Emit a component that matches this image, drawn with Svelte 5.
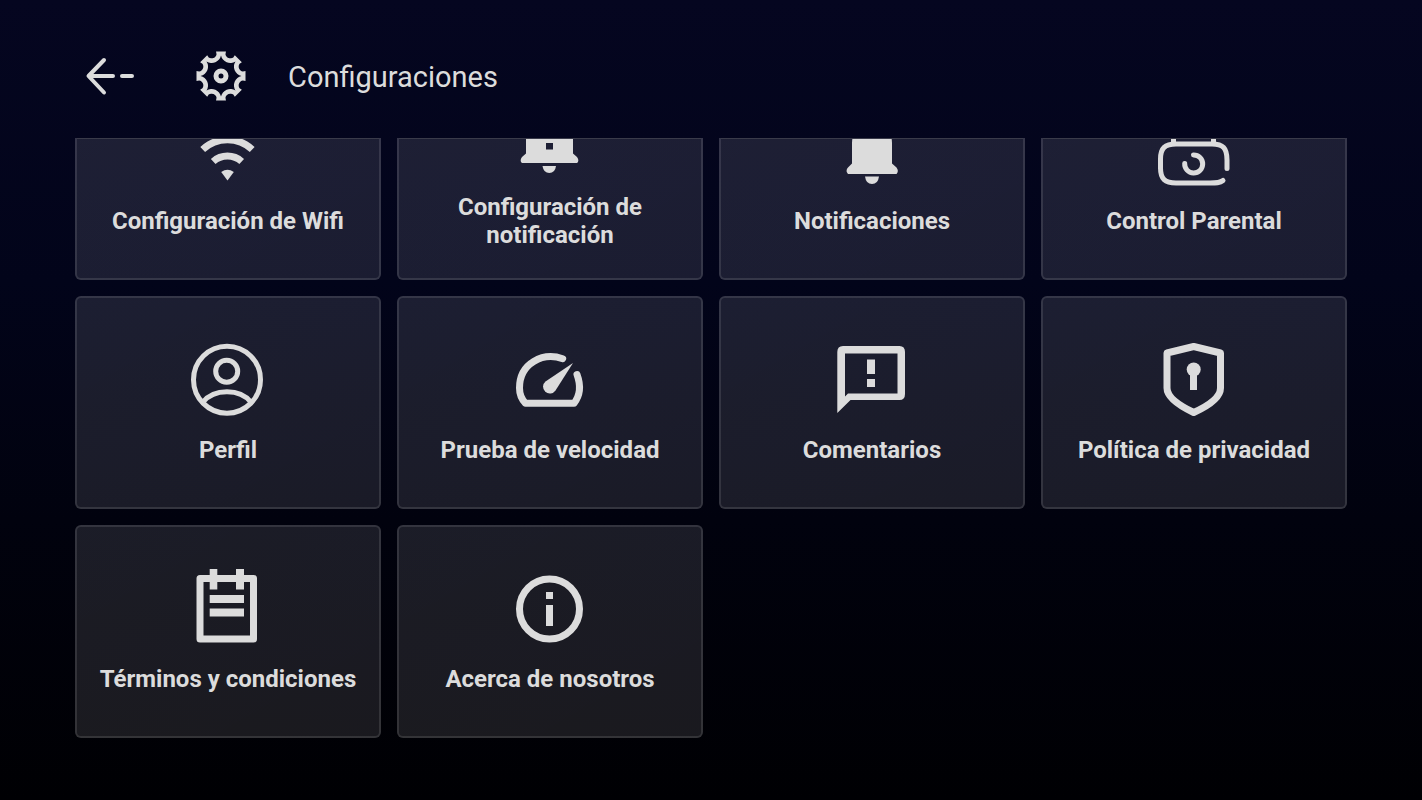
<script lang="ts">
  // Settings entries, in grid order
  const items = [
    { icon: 'wifi', label: 'Configuración de Wifi' },
    { icon: 'bell-alert', label: 'Configuración de notificación' },
    { icon: 'bell', label: 'Notificaciones' },
    { icon: 'parental', label: 'Control Parental' },
    { icon: 'profile', label: 'Perfil' },
    { icon: 'speed', label: 'Prueba de velocidad' },
    { icon: 'feedback', label: 'Comentarios' },
    { icon: 'privacy', label: 'Política de privacidad' },
    { icon: 'terms', label: 'Términos y condiciones' },
    { icon: 'info', label: 'Acerca de nosotros' },
  ];

  const polar = (r: number, deg: number) => {
    const a = (deg * Math.PI) / 180;
    return `${(26 + r * Math.cos(a)).toFixed(2)} ${(26 + r * Math.sin(a)).toFixed(2)}`;
  };

  // Eight-toothed gear: flat teeth joined by concave arcs
  function gearPath() {
    let outer = '';
    let inner = '';
    for (let k = 0; k < 8; k++) {
      const a = k * 45;
      outer += `${k ? 'L' : 'M'}${polar(25, a - 11.5)}L${polar(25, a + 11.5)}L${polar(22.3, a + 11.5)}A5 5 0 0 0 ${polar(22.3, a + 33.5)}`;
      inner += `${k ? '' : `M${polar(20.5, a)}`}A9.5 9.5 0 0 0 ${polar(20.5, a + 45)}`;
    }
    return `${outer}Z${inner}Z`;
  }
</script>

<div class="screen">
  <header class="header">
    <button class="back" aria-label="Volver">
      <svg width="52" height="40" viewBox="0 0 52 40" aria-hidden="true">
        <path class="line arrow" d="M20 4 4.500 20 20 36.500M5 20H29M38 20H48" />
      </svg>
    </button>
    <svg class="gear" width="52" height="52" viewBox="0 0 52 52" aria-hidden="true">
      <path fill-rule="evenodd" d={gearPath()} />
      <circle class="line w5" cx="26" cy="26" r="5" />
    </svg>
    <h1>Configuraciones</h1>
  </header>

  <main class="list">
    <div class="grid">
      {#each items as item}
        <button class="card">
          <svg width="80" height="80" viewBox="0 0 80 80" aria-hidden="true">
            {#if item.icon === 'wifi'}
              <path class="line w7 flat" d="M14.700 38.500A36.300 36.300 0 0 1 64.200 38.500M25.200 50.500A21.400 21.400 0 0 1 53.700 50.500" />
              <path d="M39.500 69.500 33.200 61Q39.500 56.500 45.800 61Z" />
            {:else if item.icon === 'bell-alert'}
              <path fill-rule="evenodd" d="M16 56.500V32Q16 15 33 11V9a6.500 6.500 0 0 1 13 0V11Q63 15 63 32V56.500L67 60Q69 62.500 68 65L67 66H12L11 65Q10 62.500 12 60ZM36 46V52.500H43V46Z" />
              <path d="M32.500 69H46Q45 76 39.300 76T32.500 69Z" />
            {:else if item.icon === 'bell'}
              <path d="M20 52.500V32Q20 18 34 14V12a6 6 0 0 1 12 0V14Q60 18 60 32V52.500L64.500 56.500Q66.500 59 65.500 61.500L64.500 63H16L15 61.500Q13.800 59 16 56.500Z" />
              <path d="M33 65.500H47Q46 73 40 73T33 65.500Z" />
            {:else if item.icon === 'parental'}
              <path class="line w5" d="M73 57.500V49C73 37 69 33 58 33H22C11 33 6.500 37 6.500 48V57C6.500 68 11 72 22 72H56C62 72 66 72 69 69.500" />
              <path class="line w5" d="M39.500 44A9 9 0 1 1 30.700 52.500" />
              <path class="line w5 flat" d="M19.500 33V24M59.500 33V24" />
            {:else if item.icon === 'profile'}
              <circle class="line w5" cx="39" cy="39.700" r="33.500" />
              <circle class="line w5" cx="38.700" cy="31.300" r="11" />
              <path class="line w5" d="M14.800 62.300C26 48.300 52 48.300 63 62.300" />
            {:else if item.icon === 'speed'}
              <path class="line w7" d="M52.700 18.700C33 12 9.500 23 9.500 48Q9.500 57 15.500 63.300H64C70.500 55 70.500 44 67 34.500" />
              <path d="M63 23 45.500 50.500A6.800 6.800 0 1 1 35.500 41.500Z" />
            {:else if item.icon === 'feedback'}
              <path fill-rule="evenodd" d="M11 6H67.500Q73 6 73 12V54Q73 60 67.500 60H18.500L5.300 73V12Q5.300 6 11 6ZM13 13.500V56.500L16 53.500H65.500V13.500Z" />
              <path d="M35 19.500H43V34H35ZM35 39H43V47H35Z" />
            {:else if item.icon === 'privacy'}
              <path class="line w7" d="M39.700 6.500 66.500 13V48C66.500 58 54 66 39.700 72.500C26 66 13 58 13 48V13Z" />
              <circle cx="39.700" cy="29.500" r="7" />
              <path d="M36 32H43V50H36Z" />
            {:else if item.icon === 'terms'}
              <rect class="line w7" x="12" y="9.500" width="53.500" height="60.500" />
              <path d="M21.700 0H29.300V20.500H21.700ZM48 0H56V20.500H48ZM21.700 26H56V34H21.700ZM21.700 39.500H56V47.500H21.700Z" />
            {:else}
              <circle class="line w7" cx="39.500" cy="40" r="30" />
              <path d="M36 23H43V30H36ZM36 36H43V57H36Z" />
            {/if}
          </svg>
          <span class="label">{item.label}</span>
        </button>
      {/each}
    </div>
  </main>
</div>

<style>
  :global(body) {
    background: #000003;
  }

  .screen {
    display: flex;
    flex-direction: column;
    min-height: 100vh;
    background: linear-gradient(180deg, #050620 0%, #02041a 35%, #01020e 65%, #000003 100%);
    color: #dcdcdc;
    font-family: Roboto, sans-serif;
  }

  .header {
    display: flex;
    align-items: center;
    box-sizing: border-box;
    height: 138px;
    padding: 30px 84px 16px;
  }

  button {
    padding: 0;
    border: 0;
    background: none;
    color: inherit;
    font: inherit;
    cursor: pointer;
  }

  .back {
    display: flex;
  }

  .gear {
    margin: 0 41px 0 59px;
  }

  h1 {
    margin: 0;
    padding-top: 2px;
    font-size: 29px;
    line-height: 36px;
    font-weight: 400;
  }

  svg {
    display: block;
    flex: none;
    fill: currentColor;
  }

  .line {
    fill: none;
    stroke: currentColor;
    stroke-linecap: round;
    stroke-linejoin: round;
  }

  .arrow {
    stroke-width: 4px;
  }

  .w5 {
    stroke-width: 5px;
  }

  .w7 {
    stroke-width: 7px;
  }

  .flat {
    stroke-linecap: butt;
  }

  .list {
    overflow: hidden;
    padding: 0 75px 62px;
  }

  /* The list is scrolled part of the way down its first row */
  .grid {
    display: grid;
    grid-template-columns: repeat(4, 1fr);
    grid-auto-rows: 213px;
    gap: 16px;
    margin-top: -71px;
  }

  .card {
    position: relative;
    display: flex;
    flex-direction: column;
    align-items: center;
    justify-content: center;
    gap: 16px;
    padding: 0 16px 2px;
    border: 2px solid rgba(255, 255, 255, 0.11);
    border-radius: 6px;
    background: linear-gradient(150deg, rgba(250, 252, 255, 0.11), rgba(252, 248, 255, 0.1));
  }

  /* Hairline along the edge where the first row is cut off */
  .card:nth-child(-n + 4)::after {
    content: '';
    position: absolute;
    top: 69px;
    left: 0;
    right: 0;
    height: 1px;
    background: #3a3b4a;
  }

  .label {
    font-size: 24px;
    line-height: 28px;
    font-weight: 700;
    text-align: center;
  }
</style>
